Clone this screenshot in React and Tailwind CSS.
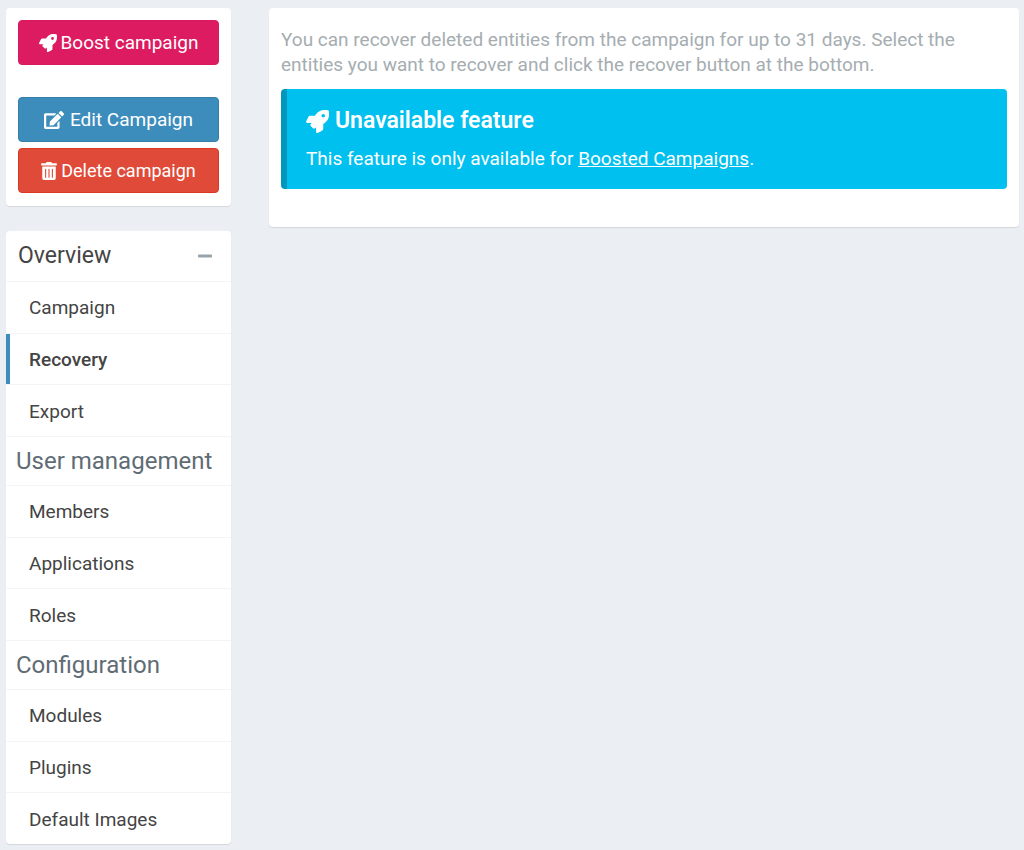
import React from 'react';
import { FaRocket, FaEdit, FaTrashAlt, FaMinus } from 'react-icons/fa';

const sections = [
  { title: 'Overview', items: ['Campaign', 'Recovery', 'Export'] },
  { title: 'User management', items: ['Members', 'Applications', 'Roles'] },
  { title: 'Configuration', items: ['Modules', 'Plugins', 'Default Images'] },
];

const MenuItems = ({ items, active }) => (
  <ul className="grid min-h-[155px] auto-rows-fr">
    {items.map((item) => (
      <li key={item} className="flex border-t border-[#f4f4f4]">
        <a
          href="#"
          aria-current={item === active ? 'page' : undefined}
          className={`flex flex-1 items-center border-l-4 pt-px pl-[19px] text-[#444444] ${
            item === active ? 'border-[#3c8dbc] font-medium' : 'border-transparent'
          }`}
        >
          {item}
        </a>
      </li>
    ))}
  </ul>
);

const CampaignActions = () => (
  <div className="flex flex-col rounded bg-white px-3 py-3 pb-[13px] shadow-[0_1px_1px_rgba(0,0,0,0.1)]">
    <a
      href="#"
      className="mb-8 flex h-[45px] items-center justify-center gap-1 rounded border border-[#d81b60] bg-[#dd1b60] text-white"
    >
      <FaRocket className="size-[18px]" />
      Boost campaign
    </a>
    <a
      href="#"
      className="mb-1.5 flex h-[45px] items-center justify-center gap-1.5 rounded border border-[#367fa9] bg-[#3c8dbc] text-white"
    >
      <FaEdit className="size-5" />
      Edit Campaign
    </a>
    <button
      type="button"
      className="flex h-[45px] items-center justify-center gap-1 rounded border border-[#d73925] bg-[#e04b39] text-lg text-white"
    >
      <FaTrashAlt className="h-[18px] w-4" />
      Delete campaign
    </button>
  </div>
);

const Sidebar = ({ active }) => (
  <aside className="flex w-[225px] shrink-0 flex-col gap-[25px]">
    <CampaignActions />

    <nav className="overflow-hidden rounded bg-white shadow-[0_1px_1px_rgba(0,0,0,0.1)]">
      {sections.map((section, index) => (
        <div key={section.title}>
          {index === 0 ? (
            <div className="flex h-[50px] items-center justify-between pr-[18px] pl-3">
              <h3 className="text-[23px] leading-7 text-[#444444]">{section.title}</h3>
              <button type="button" aria-label="Collapse" className="text-[#97a3ab]">
                <FaMinus className="size-4" />
              </button>
            </div>
          ) : (
            <h4 className="flex h-[49px] items-center border-t border-[#f4f4f4] pl-2.5 text-2xl text-[#606c74]">
              {section.title}
            </h4>
          )}
          <MenuItems items={section.items} active={active} />
        </div>
      ))}
    </nav>
  </aside>
);

const App = () => {
  return (
    <div className="flex min-h-screen items-start gap-[38px] bg-[#ebeef3] pt-2 pr-[5px] pb-1.5 pl-1.5 font-['Roboto',sans-serif] text-[19px] leading-[25px]">
      <Sidebar active="Recovery" />

      <main className="min-w-0 flex-1 rounded bg-white px-3 pt-[19px] pb-[38px] shadow-[0_1px_1px_rgba(0,0,0,0.1)]">
        <p className="mb-3 text-[#a5adb1]">
          You can recover deleted entities from the campaign for up to 31 days. Select the
          entities you want to recover and click the recover button at the bottom.
        </p>

        {/* Boosted campaigns callout */}
        <div className="rounded border-l-[6px] border-[#0097bc] bg-[#00c0ef] px-[19px] pt-[19px] pb-[18px] text-white">
          <h4 className="mb-3 flex items-center gap-1.5 text-[23px] leading-[26px] font-semibold">
            <FaRocket className="size-[23px]" />
            Unavailable feature
          </h4>
          <p>
            This feature is only available for{' '}
            <a href="#" className="underline">
              Boosted Campaigns
            </a>
            .
          </p>
        </div>
      </main>
    </div>
  );
};

export default App;
